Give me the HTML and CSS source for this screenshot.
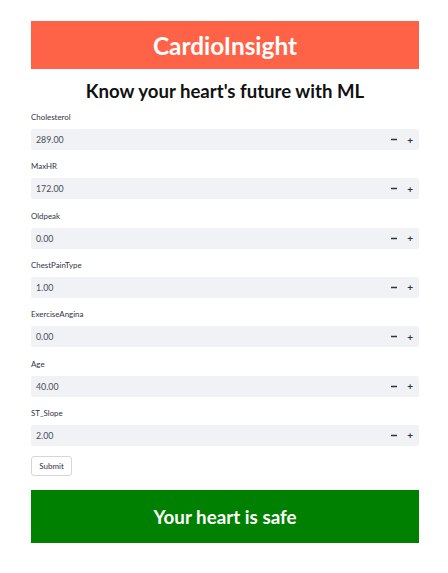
FILE: index.html
```html
<!DOCTYPE html>
<html>
<head>
<meta charset="utf-8">
<link rel="stylesheet" href="styles.css">
</head>
<body>
<main class="page">
  <div class="banner banner-top">CardioInsight</div>
  <h2 class="subtitle">Know your heart's future with ML</h2>
  <form class="form">
    <div class="field"><div class="label">Cholesterol</div><div class="input"><span class="val">289.00</span><span class="steps"><svg class="minus" width="6" height="3" viewBox="0 0 6 3"><rect x="0" y="0.75" width="6" height="1.5" fill="#31333f"/></svg><span class="plus">+</span></span></div></div>
    <div class="field"><div class="label">MaxHR</div><div class="input"><span class="val">172.00</span><span class="steps"><svg class="minus" width="6" height="3" viewBox="0 0 6 3"><rect x="0" y="0.75" width="6" height="1.5" fill="#31333f"/></svg><span class="plus">+</span></span></div></div>
    <div class="field"><div class="label">Oldpeak</div><div class="input"><span class="val">0.00</span><span class="steps"><svg class="minus" width="6" height="3" viewBox="0 0 6 3"><rect x="0" y="0.75" width="6" height="1.5" fill="#31333f"/></svg><span class="plus">+</span></span></div></div>
    <div class="field"><div class="label">ChestPainType</div><div class="input"><span class="val">1.00</span><span class="steps"><svg class="minus" width="6" height="3" viewBox="0 0 6 3"><rect x="0" y="0.75" width="6" height="1.5" fill="#31333f"/></svg><span class="plus">+</span></span></div></div>
    <div class="field"><div class="label">ExerciseAngina</div><div class="input"><span class="val">0.00</span><span class="steps"><svg class="minus" width="6" height="3" viewBox="0 0 6 3"><rect x="0" y="0.75" width="6" height="1.5" fill="#31333f"/></svg><span class="plus">+</span></span></div></div>
    <div class="field"><div class="label">Age</div><div class="input"><span class="val">40.00</span><span class="steps"><svg class="minus" width="6" height="3" viewBox="0 0 6 3"><rect x="0" y="0.75" width="6" height="1.5" fill="#31333f"/></svg><span class="plus">+</span></span></div></div>
    <div class="field"><div class="label">ST_Slope</div><div class="input"><span class="val">2.00</span><span class="steps"><svg class="minus" width="6" height="3" viewBox="0 0 6 3"><rect x="0" y="0.75" width="6" height="1.5" fill="#31333f"/></svg><span class="plus">+</span></span></div></div>
    <div class="actions"><button type="button" class="submit">Submit</button></div>
  </form>
  <div class="banner banner-result">Your heart is safe</div>
</main>
</body>
</html>
```
FILE: styles.css
```css
html, body {
  margin: 0;
  padding: 0;
  background: #ffffff;
}
body {
  font-family: "Lato", "Open Sans", sans-serif;
  color: #262730;
}
.page {
  width: 388px;
  margin: 0 0 0 31px;
  padding-top: 21px;
  display: flex;
  flex-direction: column;
}
.banner {
  color: #ffffff;
  font-weight: 700;
  display: flex;
  align-items: center;
  justify-content: center;
}
.banner-top {
  background: #ff6347;
  height: 48px;
  font-size: 24.4px;
}
.subtitle {
  margin: 0;
  height: 42px;
  line-height: 44px;
  text-align: center;
  font-size: 18.6px;
  font-weight: 700;
  color: #111111;
}
.form {
  display: flex;
  flex-direction: column;
  gap: 10.33px;
}
.field {
  display: flex;
  flex-direction: column;
}
.label {
  font-size: 7.9px;
  line-height: 12px;
  margin-bottom: 6px;
  color: #31333f;
}
.input {
  height: 21px;
  background: #f0f2f6;
  display: flex;
  align-items: center;
  justify-content: space-between;
  padding: 0 6px 0 5px;
  border-radius: 2px;
}
.val {
  font-size: 8.8px;
  color: #4a4c57;
}
.steps {
  display: flex;
  align-items: center;
  gap: 10px;
  font-size: 10px;
  font-weight: 700;
  color: #31333f;
}
.minus {
  display: block;
}
.plus {
  line-height: 10px;
}
.actions {
  display: flex;
  margin-top: -0.8px;
}
.submit {
  width: 41px;
  height: 20px;
  padding: 0;
  background: #ffffff;
  border: 1px solid #d6d6d9;
  border-radius: 3px;
  font-family: inherit;
  font-size: 8px;
  color: #31333f;
}
.banner-result {
  margin-top: 14px;
  background: #008000;
  height: 53px;
  font-size: 18.8px;
}
```
